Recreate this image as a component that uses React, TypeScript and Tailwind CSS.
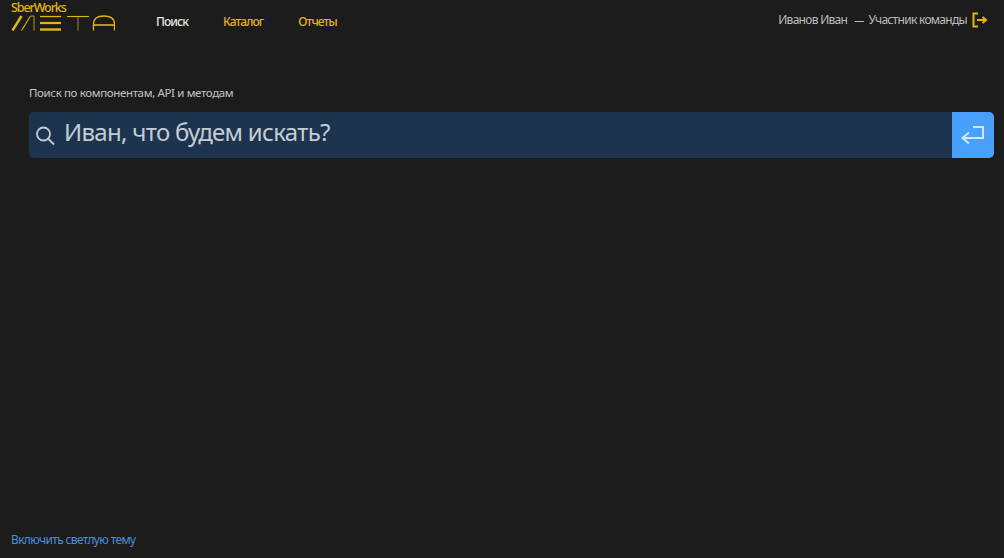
const font = { fontFamily: '"Noto Sans", "Liberation Sans", sans-serif' };

function MetaLogo() {
  return (
    <svg width="104" height="16" viewBox="0 0 104 16" fill="none" aria-hidden>
      <g stroke="#e3b60f">
        <path d="M1.5 15.5 L10.5 1" strokeWidth="2.4" />
        <path d="M10.5 15.5 L19.5 1" strokeWidth="1.1" />
        <path d="M19.5 1 L23 1 V15.5" strokeWidth="0.8" />
        <path d="M29 1.5 H50" strokeWidth="1.3" />
        <path d="M29 8 H50" strokeWidth="2.2" />
        <path d="M29 14.5 H50" strokeWidth="2.4" />
        <path d="M56 1.5 H78" strokeWidth="1.1" />
        <path d="M67 1.5 V15.5" strokeWidth="0.7" />
        <path d="M82.5 15.5 V9 C82.5 3.5 86 1 93 1 C100 1 103.5 3.5 103.5 9 V15.5" strokeWidth="1.3" />
        <path d="M82.5 10 H103.5" strokeWidth="1.6" />
      </g>
    </svg>
  );
}

export default function App() {
  return (
    <div className="flex h-[558px] w-[1004px] flex-col overflow-hidden bg-[#1c1c1c]" style={font}>
      <header className="flex h-[32px] items-start justify-between pl-[11px] pr-[16px]">
        <div className="flex items-start">
          <div className="flex w-[145px] flex-col">
            <span className="text-[12.5px] leading-[15px] font-medium tracking-[-1.1px] whitespace-nowrap text-[#e3b60f]">SberWorks</span>
            <MetaLogo />
          </div>
          <nav className="flex gap-[35px] pt-[14px] text-[12px] leading-[16px] font-medium tracking-[-0.9px]">
            <a className="text-[#e4e4e4]">Поиск</a>
            <a className="text-[#e3b60f]">Каталог</a>
            <a className="text-[#e3b60f]">Отчеты</a>
          </nav>
        </div>
        <div className="flex items-center pt-[12px] text-[12px] leading-[16px] tracking-[-0.7px] text-[#bcbcbc]">
          <span>Иванов Иван</span>
          <span className="ml-[7px] mr-[5px] text-[10px]">—</span>
          <span>Участник команды</span>
          <svg className="ml-[5px]" width="16" height="16" viewBox="0 0 16 16" fill="none" stroke="#e3b60f" strokeWidth="2" aria-hidden>
            <path d="M6 1.5 H1.5 V14.5 H6" />
            <path d="M5 8 H13" />
            <path d="M10.5 5 L14 8 L10.5 11" />
          </svg>
        </div>
      </header>

      <main className="flex-1 pl-[29px] pr-[10px] pt-[53px]">
        <label className="block text-[11.5px] leading-[16px] tracking-[-0.36px] text-[#c4c4c4]">
          Поиск по компонентам, API и методам
        </label>
        <div className="mt-[11px] flex h-[46px] overflow-hidden rounded-[5px] bg-[#1d344e]">
          <div className="flex flex-1 items-center pl-[5px]">
            <svg width="22" height="22" viewBox="0 0 22 22" fill="none" stroke="#c6ccd4" strokeWidth="1.8" aria-hidden>
              <circle cx="9.5" cy="10" r="6.5" />
              <path d="M14.5 15 L20 20.5" />
            </svg>
            <span className="ml-[8px] -translate-y-[3px] text-[24px] leading-[32px] tracking-[-0.7px] text-[#c6ccd4]">
              Иван, что будем искать?
            </span>
          </div>
          <button className="flex w-[42px] items-center justify-center bg-[#49a0fb]">
            <svg width="26" height="22" viewBox="0 0 26 22" fill="none" stroke="#d6e6f6" strokeWidth="2" aria-hidden>
              <path d="M13 3 H23 V14 H3" />
              <path d="M9 8.5 L2.5 14 L9 19.5" />
            </svg>
          </button>
        </div>
      </main>

      <footer className="pb-[8px] pl-[11px]">
        <a className="text-[12px] leading-[16px] tracking-[-0.65px] text-[#4a90de]">Включить светлую тему</a>
      </footer>
    </div>
  );
}
